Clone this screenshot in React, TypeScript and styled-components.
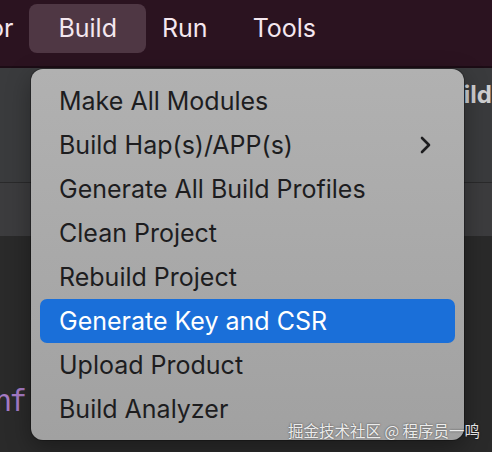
import * as React from 'react';
import styled, { createGlobalStyle } from 'styled-components';

const GlobalStyle = createGlobalStyle`
    html, body {
        margin: 0;
        padding: 0;
        background: #2a2a2a;
    }
    body {
        font-family: Inter, 'Noto Sans', 'Liberation Sans', sans-serif;
    }
`;

const Screen = styled.div`
    position: relative;
    width: 492px;
    height: 452px;
    overflow: hidden;
    background: #2a2a2a;
`;

const MenuBar = styled.div`
    display: flex;
    align-items: flex-start;
    gap: 45px;
    height: 62px;
    padding-top: 4px;
    background: #2b1320;
    border-bottom: 2px solid #1c0c15;
    color: #f4e7ef;
    font-size: 25px;
    white-space: nowrap;
`;

const MenuTitle = styled.div<{ $active?: boolean; $offset?: number }>`
    height: 49px;
    line-height: 49px;
    padding: ${(p) => (p.$active ? '0 29px' : '0')};
    margin: ${(p) => (p.$active ? '0 -29px' : '0')};
    margin-left: ${(p) => (p.$offset !== undefined ? `${p.$offset}px` : undefined)};
    border-radius: 8px;
    background: ${(p) => (p.$active ? '#4f3744' : 'transparent')};
`;

const ToolBand = styled.div`
    display: flex;
    align-items: flex-start;
    height: 114px;
    background: #3a3b3d;
    border-bottom: 1px solid #2a2a2b;
`;

const ToolTitle = styled.div`
    margin-left: 433px;
    margin-top: 12px;
    font-size: 24px;
    font-weight: 700;
    color: #cfcfd1;
    white-space: nowrap;
`;

const TabBand = styled.div`
    height: 53px;
    background: #3c3c3e;
`;

const Editor = styled.div`
    padding-top: 148px;
    font-family: 'DejaVu Sans Mono', 'Liberation Mono', monospace;
    font-size: 30px;
    line-height: 34px;
    color: #a67bc5;
    white-space: nowrap;
`;

const CodeLine = styled.div`
    margin-left: -6px;
    letter-spacing: -3px;
`;

const Dropdown = styled.div`
    position: absolute;
    left: 31px;
    top: 69px;
    width: 433px;
    padding: 10px 9px 9px;
    box-sizing: border-box;
    border-radius: 12px;
    background: linear-gradient(180deg, #b1b1b1 0%, #a9a9a9 50%, #a1a1a1 100%);
    box-shadow: 0 0 0 1px rgba(0, 0, 0, 0.25), 0 8px 24px rgba(0, 0, 0, 0.35);
    display: flex;
    flex-direction: column;
`;

const MenuItem = styled.div<{ $selected?: boolean }>`
    display: flex;
    align-items: center;
    justify-content: space-between;
    height: 44px;
    padding: 0 20px 0 19px;
    border-radius: 7px;
    font-size: 25px;
    color: ${(p) => (p.$selected ? '#ffffff' : '#1d1d1f')};
    background: ${(p) => (p.$selected ? '#1a6fd9' : 'transparent')};
    white-space: nowrap;
`;

const Chevron = styled.svg`
    width: 14px;
    height: 18px;
    margin-right: 2px;
`;

const Watermark = styled.div`
    position: absolute;
    left: 288px;
    top: 419px;
    font-family: 'Noto Sans CJK SC', sans-serif;
    font-size: 15.5px;
    color: rgba(255, 255, 255, 0.88);
    text-shadow: 0 0 2px rgba(0, 0, 0, 0.6);
    white-space: nowrap;
`;

const items = [
    'Make All Modules',
    'Build Hap(s)/APP(s)',
    'Generate All Build Profiles',
    'Clean Project',
    'Rebuild Project',
    'Generate Key and CSR',
    'Upload Product',
    'Build Analyzer',
];

export default function App(): React.ReactElement {
    return (
        <Screen>
            <GlobalStyle />
            <MenuBar>
                <MenuTitle $offset={-11}>or</MenuTitle>
                <MenuTitle $active>Build</MenuTitle>
                <MenuTitle>Run</MenuTitle>
                <MenuTitle>Tools</MenuTitle>
            </MenuBar>
            <ToolBand>
                <ToolTitle>Build</ToolTitle>
            </ToolBand>
            <TabBand />
            <Editor>
                <CodeLine>nf</CodeLine>
            </Editor>

            <Dropdown>
                {items.map((label) => (
                    <MenuItem key={label} $selected={label === 'Generate Key and CSR'}>
                        <span>{label}</span>
                        {label === 'Build Hap(s)/APP(s)' && (
                            <Chevron viewBox="0 0 14 18">
                                <path
                                    d="M3 2 L10 9 L3 16"
                                    fill="none"
                                    stroke="#1d1d1f"
                                    strokeWidth="2.6"
                                    strokeLinecap="round"
                                    strokeLinejoin="round"
                                />
                            </Chevron>
                        )}
                    </MenuItem>
                ))}
            </Dropdown>

            <Watermark>掘金技术社区 @ 程序员一鸣</Watermark>
        </Screen>
    );
}
